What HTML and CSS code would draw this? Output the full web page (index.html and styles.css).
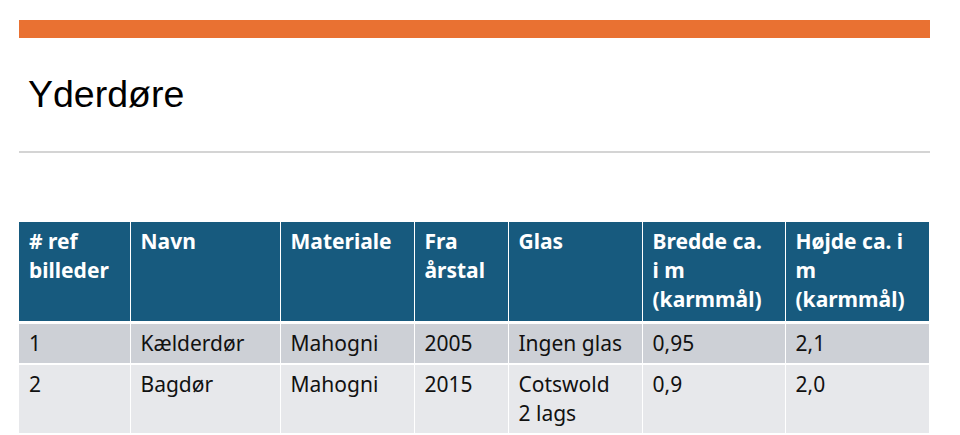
FILE: index.html
```html
<!DOCTYPE html>
<html lang="da">
<head>
<meta charset="UTF-8" />
<meta name="viewport" content="width=device-width, initial-scale=1" />
<title>Yderdøre</title>
<link rel="stylesheet" href="styles.css">
</head>
<body>

<div class="slide">
  <div class="accent"></div>
  <h1 class="title">Yderdøre</h1>
  <div class="rule"></div>

  <table class="doors">
    <thead>
      <tr>
        <th class="c-ref"># ref billeder</th>
        <th class="c-name">Navn</th>
        <th class="c-mat">Materiale</th>
        <th class="c-year">Fra årstal</th>
        <th class="c-glass">Glas</th>
        <th class="c-w">Bredde ca. i m (karmmål)</th>
        <th class="c-h">Højde ca. i m (karmmål)</th>
      </tr>
    </thead>
    <tbody>
      <tr class="odd">
        <td>1</td>
        <td>Kælderdør</td>
        <td>Mahogni</td>
        <td>2005</td>
        <td>Ingen glas</td>
        <td>0,95</td>
        <td>2,1</td>
      </tr>
      <tr class="even">
        <td>2</td>
        <td>Bagdør</td>
        <td>Mahogni</td>
        <td>2015</td>
        <td>Cotswold 2 lags</td>
        <td>0,9</td>
        <td>2,0</td>
      </tr>
    </tbody>
  </table>
</div>

</body>
</html>
```

FILE: styles.css
```css
/* Reset */
* {
  margin: 0; padding: 0; box-sizing: border-box;
}
html, body {
  height: 100%;
  background: #fff;
  overflow: hidden;
}
.slide {
  padding: 20px 30px 0 19px;
}
.accent {
  height: 18px;
  background: #e97132;
}
.title {
  font-family: 'Liberation Sans', Arial, sans-serif;
  font-weight: normal;
  font-size: 37.5px;
  color: #000;
  padding: 36px 0 0 9px;
  line-height: 40px;
  height: 113px;
}
.rule {
  height: 2px;
  background: #d4d4d4;
  margin-bottom: 69px;
}
.doors {
  width: 910px;
  border-collapse: collapse;
  font-family: 'Noto Sans', 'Open Sans', sans-serif;
  font-size: 21px;
  line-height: 29px;
  table-layout: fixed;
}
.doors th, .doors td {
  text-align: left;
  vertical-align: top;
  padding: 5px 18px 5px 10px;
  border-left: 1px solid #fff;
  border-right: 1px solid #fff;
}
.doors tr > :first-child { border-left: 0; }
.doors tr > :last-child { border-right: 0; }
.doors thead tr {
  background: #175a7e;
  color: #fff;
  border-bottom: 3px solid #fff;
}
.doors th {
  font-weight: bold;
  height: 100px;
}
.doors tbody td {
  color: #111;
}
.doors tbody tr.odd {
  background: #cdd0d6;
  border-bottom: 2px solid #fff;
}
.doors tbody tr.even {
  background: #e7e8eb;
}
.doors td { height: 41px; }
.c-ref { width: 111px; }
.c-name { width: 150px; }
.c-mat { width: 134px; }
.c-year { width: 94px; }
.c-glass { width: 134px; }
.c-w { width: 143px; }
.c-h { width: 144px; }
```
